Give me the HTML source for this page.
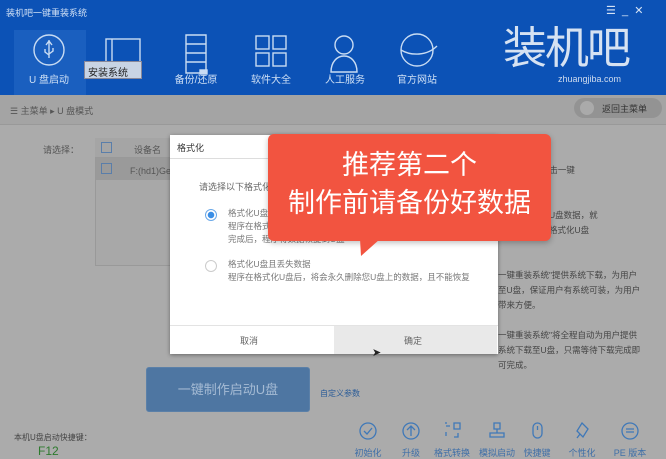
<!DOCTYPE html>
<html><head><meta charset="utf-8"><style>
*{margin:0;padding:0;box-sizing:border-box}
body{width:666px;height:455px;overflow:hidden;background:#ababab;font-family:"Liberation Sans","Noto Sans CJK SC",sans-serif;position:relative;font-size:9px;color:#555}
.a{position:absolute}
.hdr{left:0;top:0;width:666px;height:95px;background:#0c52b6}
.nav{color:#cfe0f5;font-size:10px;text-align:center;width:70px}
.ic{stroke:#c9dcf3;fill:none;stroke-width:1.4}
.bi{stroke:#3f78b8;fill:none;stroke-width:1.3}
.bl{color:#3f6fa8;font-size:9px;width:50px;text-align:center}
</style></head><body>
<div class="a hdr"></div>
<div class="a" style="left:6px;top:6px;color:#d0e0f5;font-size:9px">装机吧一键重装系统</div>
<div class="a" style="left:606px;top:4px;color:#d5e3f5;font-size:11px">☰ &nbsp;_ &nbsp;✕</div>
<div class="a" style="left:14px;top:30px;width:72px;height:65px;background:#1a5fbf"></div>
<svg class="a" style="left:0;top:0" width="666" height="95">
<g class="ic">
<circle cx="49" cy="50" r="15"/><path d="M49 40v18M46 45l3-4 3 4M45 49v3l4 3M53 48v3l-4 3"/>
<rect x="106" y="39" width="34" height="28"/><path d="M112 39v28"/>
<path d="M186 35h20v38h-20zM186 44h20M186 53h20M186 62h20"/><rect x="200" y="70" width="7" height="4" fill="#c9dcf3"/>
<rect x="256" y="36" width="13" height="13"/><rect x="273" y="36" width="13" height="13"/><rect x="256" y="53" width="13" height="13"/><rect x="273" y="53" width="13" height="13"/>
<circle cx="344" cy="45" r="9"/><path d="M331 72c0-10 6-16 13-16s13 6 13 16z"/>
<circle cx="417" cy="50" r="16"/><path d="M401 50c10 6 26 6 36-4"/>
</g></svg>
<div class="a nav" style="left:14px;top:71px">U 盘启动</div>
<div class="a" style="left:84px;top:61px;width:58px;height:18px;background:#c8d4e4;border:1px solid #889;color:#222;font-size:10px;padding:2px 3px">安装系统</div>
<div class="a nav" style="left:161px;top:71px">备份/还原</div>
<div class="a nav" style="left:236px;top:71px">软件大全</div>
<div class="a nav" style="left:310px;top:71px">人工服务</div>
<div class="a nav" style="left:382px;top:71px">官方网站</div>
<div class="a" style="left:503px;top:24px;color:#d6e2f2;font-size:44px;font-weight:normal;letter-spacing:-2px;line-height:50px">装机吧</div>
<div class="a" style="left:558px;top:74px;color:#cfdcef;font-size:9px">zhuangjiba.com</div>
<div class="a" style="left:0;top:95px;width:666px;height:30px;background:#a4a4a4;border-bottom:1px solid #999"></div>
<div class="a" style="left:10px;top:104px;color:#555;font-size:9px">☰ 主菜单 ▸ U 盘模式</div>
<div class="a" style="left:574px;top:98px;width:88px;height:20px;border-radius:10px;background:#939393;color:#333;font-size:9px;padding:4px 0 0 28px">返回主菜单</div>
<div class="a" style="left:580px;top:101px;width:14px;height:14px;border-radius:7px;background:#aaa"></div>
<div class="a" style="left:43px;top:143px">请选择：</div>
<div class="a" style="left:95px;top:138px;width:80px;height:128px;border:1px solid #999;background:#a8a8a8"></div>
<div class="a" style="left:95px;top:138px;width:80px;height:20px;background:#a5a5a5;border-bottom:1px solid #999"></div>
<div class="a" style="left:96px;top:158px;width:78px;height:22px;background:#9a9a9a"></div>
<div class="a" style="left:101px;top:142px;width:11px;height:11px;border:1px solid #5a7eaa"></div>
<div class="a" style="left:101px;top:163px;width:11px;height:11px;border:1px solid #5a7eaa"></div>
<div class="a" style="left:134px;top:143px">设备名</div>
<div class="a" style="left:130px;top:166px">F:(hd1)Ge</div>
<div class="a" style="left:498px;top:163px;width:160px;line-height:15px;color:#444;font-size:8.5px">"PE版本"，点击一键<br><br><br>果用户想保存U盘数据，就<br>据，否则选择格式化U盘<br><br><br>一键重装系统"提供系统下载，为用户<br>至U盘，保证用户有系统可装，为用户<br>带来方便。<br><br>一键重装系统"将全程自动为用户提供<br>系统下载至U盘，只需等待下载完成即<br>可完成。</div>
<div class="a" style="left:170px;top:135px;width:328px;height:219px;background:#fff;box-shadow:0 1px 4px rgba(0,0,0,.4)"></div>
<div class="a" style="left:170px;top:158px;width:328px;height:1px;background:#ddd"></div>
<div class="a" style="left:177px;top:141px;color:#333;font-size:9px">格式化</div>
<div class="a" style="left:199px;top:180px;color:#666;font-size:9px">请选择以下格式化</div>
<div class="a" style="left:205px;top:209px;width:12px;height:12px;border-radius:6px;border:1px solid #6aa8e8;background:radial-gradient(#3a8ee6 3px,#fff 3.5px)"></div>
<div class="a" style="left:228px;top:207px;line-height:13px;color:#777;font-size:8.5px">格式化U盘<br>程序在格式<br>完成后，程序将数据恢复到U盘</div>
<div class="a" style="left:205px;top:260px;width:12px;height:12px;border-radius:6px;border:1px solid #ccc"></div>
<div class="a" style="left:228px;top:258px;line-height:13px;color:#777;font-size:8.5px">格式化U盘且丢失数据<br>程序在格式化U盘后，将会永久删除您U盘上的数据，且不能恢复</div>
<div class="a" style="left:170px;top:325px;width:328px;height:1px;background:#e3e3e3"></div>
<div class="a" style="left:334px;top:326px;width:163px;height:28px;background:#e9e9e9"></div>
<div class="a" style="left:240px;top:334px;color:#666;font-size:9px">取消</div>
<div class="a" style="left:404px;top:334px;color:#666;font-size:9px">确定</div>
<div class="a" style="left:372px;top:346px;color:#222;font-size:11px">➤</div>
<div class="a" style="left:268px;top:134px;width:283px;height:107px;background:#f25440;border-radius:6px;box-shadow:0 2px 6px rgba(0,0,0,.25)"></div>
<svg class="a" style="left:358px;top:239px" width="26" height="20"><path d="M2 0L3 17L22 0Z" fill="#f25440"/></svg>
<div class="a" style="left:268px;top:146px;width:283px;text-align:center;color:#fff;font-size:27px;line-height:38px">推荐第二个<br>制作前请备份好数据</div>
<div class="a" style="left:146px;top:367px;width:164px;height:45px;background:#4e76a2;border:1px solid #5b80a8;border-radius:3px;color:#a5bbd4;font-size:13px;text-align:center;line-height:44px">一键制作启动U盘</div>
<div class="a" style="left:320px;top:388px;color:#2b5c98;font-size:8px">自定义参数</div>
<div class="a" style="left:14px;top:432px;color:#444;font-size:8px">本机U盘启动快捷键：</div>
<div class="a" style="left:38px;top:444px;color:#2d7a2d;font-size:12px">F12</div>
<svg class="a" style="left:0;top:420px" width="666" height="35"><g class="bi">
<circle cx="368" cy="11" r="8"/><path d="M364 11l3 3 5-6"/>
<circle cx="411" cy="11" r="8"/><path d="M411 16V6M407 10l4-4 4 4"/>
<path d="M446 6h4M454 3h6v6h-6zM446 16v-4M458 13v4h-4M446 2v2"/>
<path d="M494 3h6v6h-6zM497 9v4M490 13h14v4h-14z"/>
<rect x="533" y="3" width="9" height="15" rx="4.5"/><path d="M537.5 6v4"/>
<path d="M582 3l6 6-5 8-6-6zM580 14l-3 4"/>
<circle cx="630" cy="11" r="8"/><path d="M626 9h8M626 12h8"/>
</g></svg>
<div class="a bl" style="left:343px;top:446px">初始化</div>
<div class="a bl" style="left:386px;top:446px">升级</div>
<div class="a bl" style="left:427px;top:446px">格式转换</div>
<div class="a bl" style="left:472px;top:446px">模拟启动</div>
<div class="a bl" style="left:512px;top:446px">快捷键</div>
<div class="a bl" style="left:557px;top:446px">个性化</div>
<div class="a bl" style="left:605px;top:446px">PE 版本</div>
</body></html>
